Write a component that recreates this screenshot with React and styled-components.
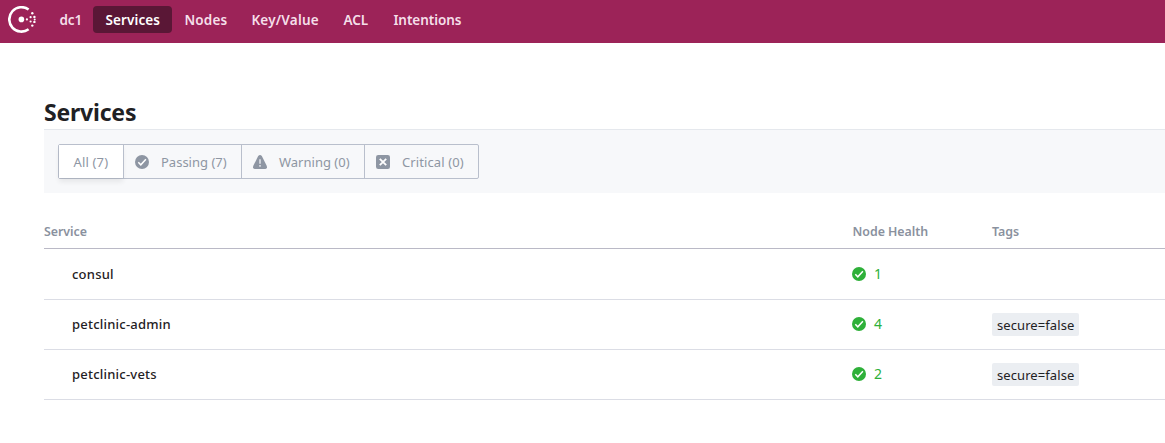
import React from "react";
import styled, { createGlobalStyle } from "styled-components";

const Global = createGlobalStyle`
  * { box-sizing: border-box; }
  body {
    margin: 0;
    background: #fff;
    color: #1f2124;
    font-family: "Noto Sans", "Open Sans", sans-serif;
    font-size: 13px;
    overflow: hidden;
  }
`;

const Header = styled.header`
  display: flex;
  align-items: flex-start;
  height: 43px;
  padding: 6px 0 0 8px;
  background: #9c2358;
`;
const Logo = styled.svg`
  display: block;
  width: 28px;
  height: 28px;
  margin-right: 11px;
  flex: none;
`;
const NavList = styled.nav`
  display: flex;
`;
const NavItem = styled.a`
  width: ${(p) => p.$w}px;
  height: 27px;
  padding-left: 12.4px;
  line-height: 29px;
  border-radius: 4px;
  font-size: 13.5px;
  font-weight: 600;
  white-space: nowrap;
  letter-spacing: ${(p) => p.$ls || 0}px;
  color: ${(p) => (p.$active ? "#fff" : "#f5dfe9")};
  background: ${(p) => (p.$active ? "#5a1736" : "transparent")};
`;
const Main = styled.main`
  padding: 54px 0 0 44px;
`;
const Title = styled.h1`
  margin: 0;
  height: 32px;
  line-height: 30px;
  font-size: 23px;
  font-weight: 700;
  letter-spacing: -0.2px;
`;
const FilterBar = styled.div`
  height: 64px;
  padding: 14px;
  border-top: 1px solid #e5e8ed;
  background: #f7f8fa;
`;
const FilterGroup = styled.div`
  display: flex;
  width: 421px;
  height: 35px;
  border: 1px solid #b9bfcc;
  border-radius: 2px;
`;
const Filter = styled.label`
  display: flex;
  align-items: center;
  width: ${(p) => p.$w}px;
  padding-left: ${(p) => (p.$active ? 14.5 : 11)}px;
  gap: 12px;
  color: #8e96a3;
  white-space: nowrap;
  letter-spacing: ${(p) => p.$ls || 0}px;
  background: ${(p) => (p.$active ? "#fff" : "transparent")};
  box-shadow: ${(p) => (p.$active ? "0 4px 5px rgba(0,0,0,.07)" : "none")};
  & + & { border-left: 1px solid #b9bfcc; }
`;
const Icon = styled.svg`
  display: block;
  width: 14px;
  height: 14px;
  flex: none;
`;
const Table = styled.div`
  margin-top: 22px;
`;
const Row = styled.div`
  display: grid;
  grid-template-columns: 808px 140px 1fr;
  align-items: center;
  height: ${(p) => (p.$first ? 51 : 50)}px;
  padding-bottom: ${(p) => (p.$first ? 0 : 1)}px;
  border-bottom: 1px solid #dbdde5;
`;
const HeadRow = styled(Row)`
  height: 34px;
  padding-bottom: 0;
  border-bottom-color: #bab9c6;
  color: #8a919e;
  font-size: 12.4px;
  font-weight: 600;
`;
const HeadCell = styled.span`
  padding-left: ${(p) => p.$pl || 0}px;
  letter-spacing: -0.05px;
`;
const Name = styled.span`
  padding-left: 28px;
  font-weight: 500;
  letter-spacing: 0.22px;
`;
const Health = styled.span`
  display: flex;
  align-items: center;
  gap: 8px;
  height: 14px;
  color: #2eb039;
  font-size: 14px;
  line-height: 12px;
`;
const Tag = styled.span`
  justify-self: start;
  width: 87px;
  height: 23px;
  margin-top: 1px;
  padding-left: 5px;
  line-height: 25px;
  border-radius: 2px;
  background: #ebeef2;
  letter-spacing: 0.08px;
  white-space: nowrap;
`;

const Check = ({ color }) => (
  <Icon viewBox="0 0 14 14">
    <circle cx="7" cy="7" r="7" fill={color} />
    <path d="M3.3 7.3 5.8 9.8 10.9 4.2" fill="none" stroke="#fff" strokeWidth="1.5" />
  </Icon>
);
const Warn = () => (
  <Icon viewBox="0 0 14 14">
    <path d="M5.2 1Q7-1 8.8 1L13.7 10.8Q14.6 13.7 12.3 14H1.7Q-.6 13.7.3 10.8Z" fill="#8e96a3" />
    <path d="M6.2 4.2h1.6v4.6H6.2zM6.2 10h1.6v1.7H6.2z" fill="#dfe2e7" />
  </Icon>
);
const Cross = () => (
  <Icon viewBox="0 0 14 14">
    <rect width="14" height="14" rx="2.2" fill="#8e96a3" />
    <path d="m3.8 3.8 6.4 6.4m0-6.4-6.4 6.4" stroke="#fff" strokeWidth="1.8" />
  </Icon>
);

const services = [
  { name: "consul", passing: 1 },
  { name: "petclinic-admin", passing: 4, tag: "secure=false" },
  { name: "petclinic-vets", passing: 2, tag: "secure=false" },
];

export default function App() {
  return (
    <>
      <Global />
      <Header>
        <Logo viewBox="0 0 28 28" fill="#fff">
          <path d="M20.6 3.5A12.2 12.2 0 1 0 20.6 23.3" fill="none" stroke="#fff" strokeWidth="2.6" />
          <circle cx="13.4" cy="13.4" r="2.8" />
          <circle cx="18.9" cy="13.4" r="1.1" />
          <circle cx="22.6" cy="11.2" r="1.1" />
          <circle cx="22.6" cy="15.5" r="1.1" />
          <circle cx="24.3" cy="7.2" r="1.2" />
          <circle cx="26.4" cy="10.9" r="1.2" />
          <circle cx="26.7" cy="13.4" r="1" />
          <circle cx="26.4" cy="15.9" r="1.2" />
          <circle cx="24.3" cy="19.6" r="1.2" />
        </Logo>
        <NavList>
          <NavItem $w={46}>dc1</NavItem>
          <NavItem $w={79} $active $ls={0.12}>Services</NavItem>
          <NavItem $w={67} $ls={0.2}>Nodes</NavItem>
          <NavItem $w={92} $ls={0.2}>Key/Value</NavItem>
          <NavItem $w={50}>ACL</NavItem>
          <NavItem $w={92} $ls={-0.05}>Intentions</NavItem>
        </NavList>
      </Header>
      <Main>
        <Title>Services</Title>
        <FilterBar>
          <FilterGroup>
            <Filter $w={64} $active $ls={0.15}>All (7)</Filter>
            <Filter $w={118}><Check color="#8e96a3" />Passing (7)</Filter>
            <Filter $w={123}><Warn />Warning (0)</Filter>
            <Filter $w={114} $ls={0.1}><Cross />Critical (0)</Filter>
          </FilterGroup>
        </FilterBar>
        <Table>
          <HeadRow>
            <HeadCell>Service</HeadCell>
            <HeadCell $pl={0.6}>Node Health</HeadCell>
            <HeadCell>Tags</HeadCell>
          </HeadRow>
          {services.map((s, i) => (
            <Row key={s.name} $first={i === 0}>
              <Name>{s.name}</Name>
              <Health><Check color="#2eb039" />{s.passing}</Health>
              {s.tag && <Tag>{s.tag}</Tag>}
            </Row>
          ))}
        </Table>
      </Main>
    </>
  );
}
